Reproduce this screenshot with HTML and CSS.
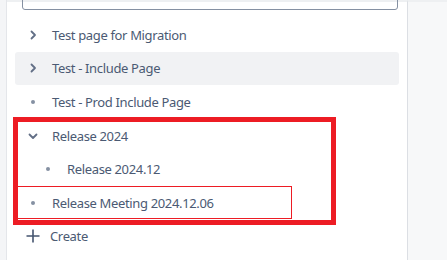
FILE: index.html
```html
<!DOCTYPE html>
<html lang="en-US">
  <head>
    <title>Page tree</title>
    <meta charset="UTF-8">
    <link rel="stylesheet" href="styles.css">
  </head>
  <body>
    <div class="rail"></div>
    <nav class="sidebar">
      <div class="search"></div>
      <ul class="tree">
        <li class="row">
          <span class="icon"><svg width="8" height="10" viewBox="0 0 8 10"><path d="M2.5 1.5 6 5 2.5 8.5" fill="none" stroke="#626f86" stroke-width="1.8" stroke-linecap="round" stroke-linejoin="round"/></svg></span>
          <span class="label">Test page for Migration</span>
        </li>
        <li class="row hover">
          <span class="icon"><svg width="8" height="10" viewBox="0 0 8 10"><path d="M2.5 1.5 6 5 2.5 8.5" fill="none" stroke="#626f86" stroke-width="1.8" stroke-linecap="round" stroke-linejoin="round"/></svg></span>
          <span class="label">Test - Include Page</span>
        </li>
        <li class="row">
          <span class="icon"><span class="dot"></span></span>
          <span class="label">Test - Prod Include Page</span>
        </li>
        <li class="row">
          <span class="icon"><svg width="10" height="8" viewBox="0 0 10 8"><path d="M1.5 2.5 5 6 8.5 2.5" fill="none" stroke="#626f86" stroke-width="1.8" stroke-linecap="round" stroke-linejoin="round"/></svg></span>
          <span class="label">Release 2024</span>
        </li>
        <li class="row child">
          <span class="icon"><span class="dot"></span></span>
          <span class="label">Release 2024.12</span>
        </li>
        <li class="row">
          <span class="icon"><span class="dot"></span></span>
          <span class="label">Release Meeting 2024.12.06</span>
        </li>
        <li class="row create">
          <span class="icon"><svg width="14" height="14" viewBox="0 0 14 14"><path d="M7 0.5v13M0.5 7h13" stroke="#44546f" stroke-width="1.6"/></svg></span>
          <span class="label">Create</span>
        </li>
      </ul>
      <div class="mark mark-group"></div>
      <div class="mark mark-item"></div>
    </nav>
    <div class="content"></div>
  </body>
</html>
```
FILE: styles.css
```css
/* page frame */
html,
body {
  height: 100%;
}
body {
  background: #f7f8f9;
  color: #4b5a73;
  display: flex;
  font-family: "Segoe UI", "Noto Sans", sans-serif;
  font-size: 13px;
  letter-spacing: -0.35px;
  margin: 0;
  overflow: hidden;
}

.rail {
  background: #f4f5f7;
  border-right: 1px solid #e4e6ea;
  flex: 0 0 6px;
}

.sidebar {
  background: #fff;
  border-right: 1px solid #dcdfe4;
  border-top: 2px solid #eef0f2;
  box-sizing: border-box;
  flex: 0 0 401px;
  padding: 0 8px 0 8px;
  position: relative;
}

.content {
  border-top: 2px solid #eef0f2;
  flex: 1;
}

/* search box, mostly scrolled off the top */
.search {
  border: 1px solid #8590a2;
  border-radius: 3px;
  height: 30px;
  margin: -24px 1px 0 7px;
}

/* tree rows */
.tree {
  list-style: none;
  margin: 8px 0 0 0;
  padding: 0;
}
.row {
  align-items: center;
  border-radius: 3px;
  display: flex;
  height: 33.6px;
  padding-left: 6px;
}
.row.hover {
  background: #f1f2f4;
}
.row.child {
  padding-left: 21px;
}
.icon {
  align-items: center;
  display: flex;
  flex: 0 0 24px;
  height: 24px;
  justify-content: center;
  margin-right: 7px;
}
.dot {
  background: #8590a2;
  border-radius: 50%;
  height: 4px;
  width: 4px;
}
.label {
  white-space: nowrap;
}
.create .icon {
  margin-right: 5px;
}

/* red annotation boxes drawn over the tree */
.mark {
  border: 5px solid #ed1c24;
  box-sizing: border-box;
  position: absolute;
}
.mark-group {
  height: 108px;
  left: 6px;
  top: 115px;
  width: 323px;
}
.mark-item {
  border-width: 1px;
  height: 33px;
  left: 10px;
  top: 184px;
  width: 275px;
}
```
